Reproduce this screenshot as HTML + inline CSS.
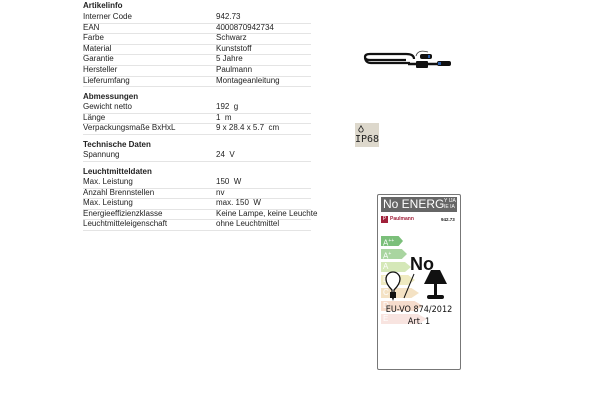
<!DOCTYPE html><html><head><style>
body{margin:0;width:612px;height:400px;background:#fff;position:relative;font-family:"Liberation Sans",sans-serif;color:#222;overflow:hidden}
.r{position:absolute;left:83px;width:228px;height:10.6px;font-size:8px;line-height:10px;border-bottom:1px solid #e4e4e4;white-space:nowrap}
.r span{position:absolute;left:133px}
.h{position:absolute;left:83px;font-size:8px;font-weight:bold;line-height:10px}
.ar{position:absolute;left:381px;height:10px;font-size:8px;color:#fff;line-height:10px;padding-left:2px;box-sizing:border-box;clip-path:polygon(0 0,80% 0,100% 50%,80% 100%,0 100%)}
</style></head><body>
<div class="h" style="top:1px">Artikelinfo</div>
<div class="r" style="top:12px">Interner Code<span>942.73</span></div>
<div class="r" style="top:22.6px">EAN<span>4000870942734</span></div>
<div class="r" style="top:33.2px">Farbe<span>Schwarz</span></div>
<div class="r" style="top:43.8px">Material<span>Kunststoff</span></div>
<div class="r" style="top:54.4px">Garantie<span>5 Jahre</span></div>
<div class="r" style="top:65px">Hersteller<span>Paulmann</span></div>
<div class="r" style="top:75.6px">Lieferumfang<span>Montageanleitung</span></div>
<div class="h" style="top:92px">Abmessungen</div>
<div class="r" style="top:102px">Gewicht netto<span>192 &nbsp;g</span></div>
<div class="r" style="top:112.6px">Länge<span>1 &nbsp;m</span></div>
<div class="r" style="top:123.2px">Verpackungsmaße BxHxL<span>9 x 28.4 x 5.7 &nbsp;cm</span></div>
<div class="h" style="top:140px">Technische Daten</div>
<div class="r" style="top:150px">Spannung<span>24 &nbsp;V</span></div>
<div class="h" style="top:167px">Leuchtmitteldaten</div>
<div class="r" style="top:177px">Max. Leistung<span>150 &nbsp;W</span></div>
<div class="r" style="top:187.6px">Anzahl Brennstellen<span>nv</span></div>
<div class="r" style="top:198.2px">Max. Leistung<span>max. 150 &nbsp;W</span></div>
<div class="r" style="top:208.8px">Energieeffizienzklasse<span>Keine Lampe, keine Leuchte</span></div>
<div class="r" style="top:219.4px">Leuchtmitteleigenschaft<span>ohne Leuchtmittel</span></div>

<svg style="position:absolute;left:362px;top:50px" width="95" height="26" viewBox="0 0 95 26">
<path d="M3 7 Q3 4 8 4 H44 Q52 4 52 9 M3 7 Q3 10 8 10 H44" stroke="#111" stroke-width="2.2" fill="none"/>
<path d="M3 8 Q4 13 9 13 H48" stroke="#111" stroke-width="2.2" fill="none"/>
<path d="M54 6 Q56 -1 66 2" stroke="#333" stroke-width="0.8" fill="none"/>
<rect x="58" y="4" width="12" height="5" rx="2" fill="#111"/>
<rect x="66" y="5" width="2" height="3" fill="#2a5ca8"/>
<path d="M46 14 H85" stroke="#111" stroke-width="2.5"/>
<rect x="54" y="11" width="12" height="7" rx="1" fill="#111"/>
<rect x="75" y="11" width="14" height="5" rx="2" fill="#111"/>
<rect x="76" y="12" width="3" height="3" fill="#2a5ca8"/>
</svg>
<div style="position:absolute;left:355px;top:123px;width:24px;height:24px;background:#ddd8cc;font-family:'DejaVu Sans Mono',monospace;font-size:10px;line-height:10px;color:#222">
<svg style="position:absolute;left:3px;top:2px" width="6" height="8" viewBox="0 0 6 8"><path d="M3 0.5 Q2 3 1 4 A2.2 2.2 0 1 0 5 4 Q4 3 3 0.5" fill="none" stroke="#222" stroke-width="0.8"/></svg>
<div style="position:absolute;left:0;top:12px">IP68</div></div>

<div style="position:absolute;left:377px;top:194px;width:82px;height:174px;border:1px solid #777;border-radius:2px;background:#fff"></div>
<div style="position:absolute;left:381px;top:197px;width:76px;height:15px;background:#666;color:#fff;font-size:12px;line-height:15px;padding-left:2px;box-sizing:border-box;white-space:nowrap">No ENERG<span style="font-size:5px;position:absolute;left:63px;top:1px;line-height:6px">Y IJA<br>IE IA</span></div>
<div style="position:absolute;left:381px;top:216px;width:7px;height:7px;background:#a0203a;color:#fff;font-size:5px;line-height:7px;text-align:center">P</div>
<div style="position:absolute;left:390px;top:216px;font-size:5px;color:#a0203a;font-weight:bold">Paulmann</div>
<div style="position:absolute;left:441px;top:217px;font-size:4.5px;font-weight:bold">942.73</div>
<div class="ar" style="top:236px;width:22px;background:#7bbf7a">A<sup style="font-size:5px">++</sup></div>
<div class="ar" style="top:249px;width:26px;background:#a9d5a0">A<sup style="font-size:5px">+</sup></div>
<div class="ar" style="top:262px;width:30px;background:#d5e8b8">A</div>
<div class="ar" style="top:275px;width:34px;background:#efeac0">B</div>
<div class="ar" style="top:288px;width:38px;background:#f4e2c4">C</div>
<div class="ar" style="top:301px;width:42px;background:#f6dccc">D</div>
<div class="ar" style="top:314px;width:46px;background:#f8e4e0">E</div>
<div style="position:absolute;left:410px;top:254px;font-size:18px;font-weight:bold;color:#111">No</div>
<svg style="position:absolute;left:384px;top:268px" width="66" height="34" viewBox="0 0 66 34">
<path d="M8 28 V22 Q2 16 2 11 A7 7 0 0 1 16 11 Q16 16 10 22 V28" fill="#fff" stroke="#111" stroke-width="1.3"/>
<rect x="6" y="24" width="6" height="6" fill="#111"/><path d="M8 30 L9 33 L10 30" fill="#111"/>
<path d="M20 30 L30 6" stroke="#111" stroke-width="1"/>
<path d="M47 2 H56 L63 16 H40 Z" fill="#111"/>
<rect x="50" y="16" width="3" height="12" fill="#111"/>
<rect x="43" y="27" width="17" height="4" rx="2" fill="#111"/>
</svg>
<div style="position:absolute;left:381px;top:305px;width:76px;text-align:center;font-size:9px;font-family:'DejaVu Sans Condensed','DejaVu Sans',sans-serif;color:#111">EU-VO 874/2012</div>
<div style="position:absolute;left:381px;top:317px;width:76px;text-align:center;font-size:9px;font-family:'DejaVu Sans Condensed','DejaVu Sans',sans-serif;color:#111">Art. 1</div>
</body></html>
